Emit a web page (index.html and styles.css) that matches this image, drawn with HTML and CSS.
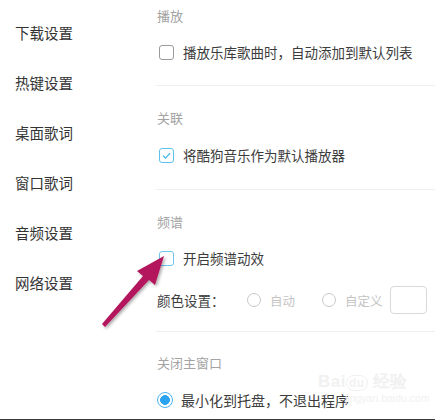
FILE: index.html
```html
<!DOCTYPE html>
<html lang="zh">
<head>
<meta charset="utf-8">
<link rel="stylesheet" href="styles.css">
</head>
<body>
<div class="app">
  <nav class="sidebar">
    <div class="nav-item">下载设置</div>
    <div class="nav-item">热键设置</div>
    <div class="nav-item">桌面歌词</div>
    <div class="nav-item">窗口歌词</div>
    <div class="nav-item">音频设置</div>
    <div class="nav-item">网络设置</div>
  </nav>
  <main class="content">
    <section class="section first">
      <div class="title">播放</div>
      <label class="row"><span class="checkbox"></span><span>播放乐库歌曲时，自动添加到默认列表</span></label>
    </section>
    <section class="section s2">
      <div class="title">关联</div>
      <label class="row"><span class="checkbox checked"><svg viewBox="0 0 14 14" width="14" height="14"><path d="M3.3 7.2 L6 9.8 L10.8 4.4" fill="none" stroke="#3fb6ec" stroke-width="1.4"/></svg></span><span>将酷狗音乐作为默认播放器</span></label>
    </section>
    <section class="section s3">
      <div class="title">频谱</div>
      <label class="row"><span class="checkbox hover"></span><span>开启频谱动效</span></label>
      <div class="row color-row">
        <span class="color-label">颜色设置：</span>
        <span class="radio-opt"><span class="radio"></span><span class="disabled">自动</span></span>
        <span class="radio-opt second"><span class="radio"></span><span class="disabled">自定义</span></span>
        <span class="swatch"></span>
      </div>
    </section>
    <section class="section last">
      <div class="title">关闭主窗口</div>
      <label class="row"><span class="radio on"></span><span>最小化到托盘，不退出程序</span></label>
    </section>
  </main>
</div>
<div class="watermark"><div class="wm-logo">Bai<span class="wm-du">du</span> 经验</div><div class="wm-url">jingyan.baidu.com</div></div>
<svg class="arrow" width="110" height="110" viewBox="0 0 110 110">
  <defs>
    <filter id="sh" x="-20%" y="-20%" width="140%" height="140%">
      <feDropShadow dx="1.5" dy="1.5" stdDeviation="1.5" flood-color="#000" flood-opacity="0.35"/>
    </filter>
  </defs>
  <path filter="url(#sh)" fill="#b3195d" d="M8 96 L49 48 L43 43 L70 28 L61 57 L55 52 L11 99 Z"/>
</svg>
<div class="bottom-line"></div>
</body>
</html>
```
FILE: styles.css
```css
* { box-sizing: border-box; }
html, body { margin: 0; padding: 0; background: #fff; }
body {
  width: 435px;
  height: 420px;
  overflow: hidden;
  position: relative;
  font-family: "Noto Sans CJK SC", "Microsoft YaHei", sans-serif;
  color: #333;
}
.app { display: flex; height: 419px; }
.sidebar {
  width: 156px;
  flex: none;
  padding: 8px 0 0 15px;
}
.nav-item {
  height: 50px;
  line-height: 50px;
  font-size: 14.5px;
  color: #333;
}
.content { flex: 1; display: flex; flex-direction: column; }
.section {
  display: flex;
  flex-direction: column;
  gap: 16px;
  padding: 22px 0 23px 1px;
  border-bottom: 1px solid #efefef;
}
.section.first { padding-top: 6px; }
.section.s2 { padding-bottom: 24px; gap: 17px; }
.section.s3 { padding-bottom: 17px; }
.section.last { border-bottom: none; padding-top: 21px; gap: 17px; }
.title {
  height: 20px;
  line-height: 20px;
  font-size: 13px;
  color: #a3a3a3;
}
.row {
  display: flex;
  align-items: center;
  height: 20px;
  font-size: 13.5px;
  color: #3c3c3c;
}
.checkbox {
  width: 15px;
  height: 15px;
  border: 1px solid #9a9a9a;
  border-radius: 3px;
  margin: 0 9px 0 2px;
  flex: none;
  position: relative;
}
.checkbox svg { position: absolute; left: 0; top: 0; width: 13px; height: 13px; }
.checkbox.checked { border-color: #5cc3ee; }
.checkbox.hover { border-color: #6dc6ee; }
.color-row { height: 28px; margin-top: 2px; }
.color-label { width: 90px; }
.radio-opt { display: flex; align-items: center; width: 75px; }
.radio-opt.second { width: 68px; }
.radio {
  width: 14px;
  height: 14px;
  border: 1px solid #c8c8c8;
  border-radius: 50%;
  margin-right: 9px;
  flex: none;
}
.disabled { color: #c4c4c4; font-size: 12.5px; }
.swatch {
  width: 37px;
  height: 28px;
  border: 1px solid #d9d9d9;
  border-radius: 4px;
}
.radio.on {
  width: 16px;
  height: 16px;
  border: 1.5px solid #49b4f0;
  background: radial-gradient(circle, #2aa3f0 0 4.6px, #fff 5.1px);
  margin: 0 8px 0 0;
}
.last .row { font-size: 14px; }
.watermark {
  position: absolute;
  left: 318px;
  top: 373px;
  color: #f1f1f1;
  font-family: "Liberation Sans", sans-serif;
  line-height: 1;
}
.wm-logo { font-size: 17px; font-weight: bold; letter-spacing: 0.5px; }
.wm-du { border: 1.5px solid #f1f1f1; border-radius: 8px; font-size: 12px; padding: 0 2px; }
.wm-url { font-size: 10.5px; margin-top: 3px; padding-left: 27px; }
.arrow {
  position: absolute;
  left: 94px;
  top: 228px;
}
.bottom-line {
  position: absolute;
  left: 0;
  right: 0;
  bottom: 0;
  height: 1.5px;
  background: #3a3a3a;
}
```
